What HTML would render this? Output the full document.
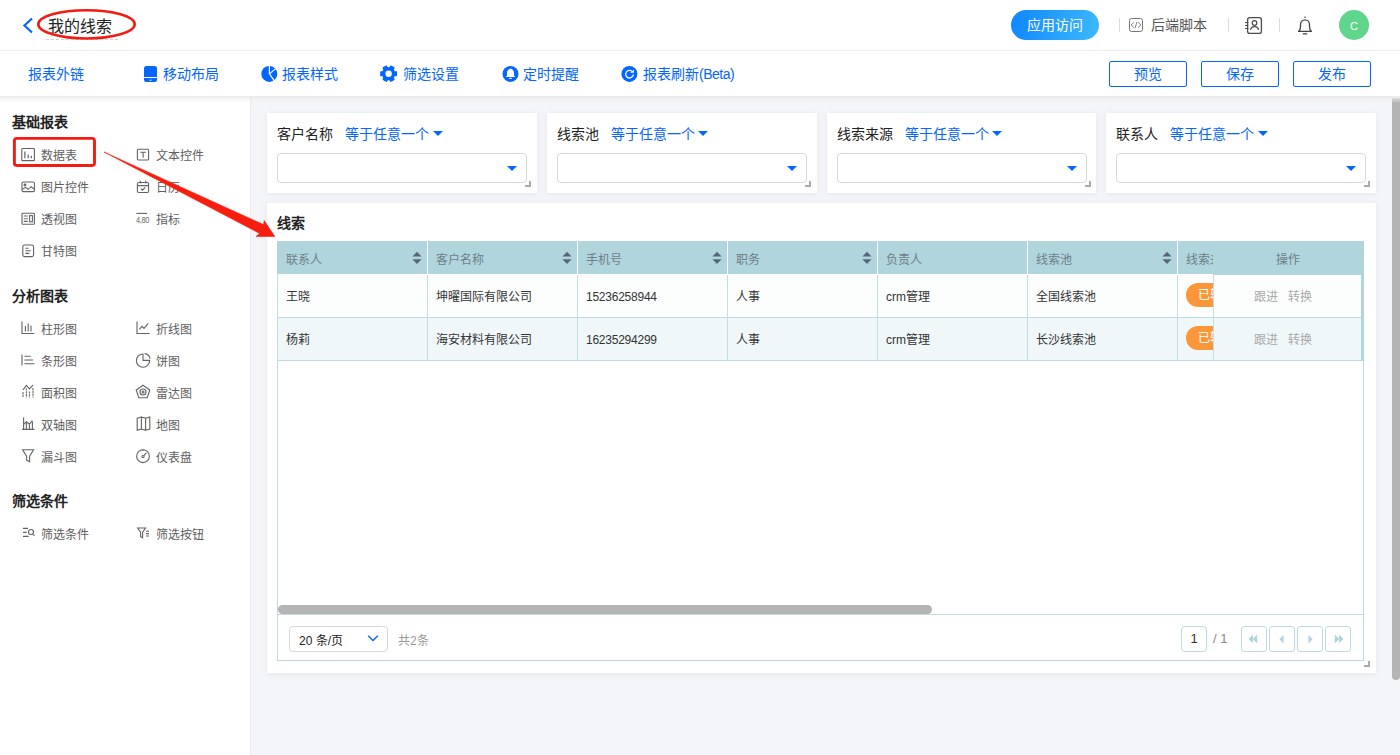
<!DOCTYPE html>
<html lang="zh-CN">
<head>
<meta charset="utf-8">
<title>我的线索</title>
<style>
*{box-sizing:border-box;margin:0;padding:0}
html,body{width:1400px;height:755px;overflow:hidden;background:#f4f5f9;font-family:"Liberation Sans",sans-serif;font-size:12px;color:#333}
.abs{position:absolute}
.t{position:absolute;white-space:nowrap;line-height:1}
#hdr{position:absolute;left:0;top:0;width:1400px;height:51px;background:#fff;border-bottom:1px solid #ececec}
#bar{position:absolute;left:0;top:51px;width:1400px;height:45px;background:#fff}
#side{position:absolute;left:0;top:96px;width:250px;height:659px;background:#fff}
.blue{color:#0465ff}
.tb{font-size:14px;color:#0465ff;top:67px}
.btn{position:absolute;top:61px;width:78px;height:26px;border:1px solid #0465ff;border-radius:2px;background:#fff;color:#0465ff;font-size:14px;text-align:center;line-height:24px}
.sec{font-size:14px;font-weight:bold;color:#222;left:12px}
.it{font-size:12px;color:#5e5e5e}
.card{position:absolute;background:#fff;box-shadow:0 1px 6px rgba(60,70,110,.08)}
.flab{font-size:14px;color:#222;top:14px;left:10px}
.fop{font-size:14px;color:#0465ff;top:14px}
.fsel{position:absolute;left:10px;top:40px;width:250px;height:30px;border:1px solid #d9d9d9;border-radius:4px;background:#fff}
.tri{position:absolute;width:0;height:0;border-left:5px solid transparent;border-right:5px solid transparent;border-top:5.5px solid #0465ff}
.rsz{position:absolute;width:6px;height:6px;border-right:2px solid #a9a9a9;border-bottom:2px solid #a9a9a9}

.th{position:absolute;top:241px;height:33px;background:#b0d5dd;border-left:1px solid #fff;font-size:12px;color:#6d7f88;line-height:38px;padding-left:8px;overflow:hidden;white-space:nowrap}
.td{position:absolute;height:43px;border-left:1px solid #c3dfe6;border-bottom:1px solid #bcdbe2;font-size:12px;color:#333;line-height:45px;padding-left:8px;overflow:hidden;white-space:nowrap}
.r1{top:275px;background:#fcfefe}
.r2{top:318px;background:#eff7f9}
.pill{position:absolute;left:8px;top:8px;height:24px;line-height:25px;border-radius:12px;background:#fb9739;color:#fff;padding:0 12px;font-size:12px}
.op{color:#a9a9a9}
.pg{position:absolute;top:626px;width:26px;height:26px;border:1px solid #bcdbe2;border-radius:3px;background:#fff}
</style>
</head>
<body>
<div id="hdr">
<div class="t" style="left:48px;top:18.5px;font-size:16px;color:#222">我的线索</div>
<div class="abs" style="left:46px;top:39px;width:72px;border-top:1px dashed #d0d0d0"></div>
<div class="abs" style="left:1011px;top:10px;width:88px;height:30px;border-radius:15px;background:linear-gradient(100deg,#0f86ff 0%,#3cbaff 100%);color:#fff;font-size:14px;text-align:center;line-height:30px">应用访问</div>
<div class="abs" style="left:1119px;top:18px;width:1px;height:14px;background:#dcdcdc"></div>
<div class="abs" style="left:1228px;top:18px;width:1px;height:14px;background:#dcdcdc"></div>
<div class="abs" style="left:1279px;top:18px;width:1px;height:14px;background:#dcdcdc"></div>
<div class="t" style="left:1151px;top:18px;font-size:14px;color:#555">后端脚本</div>
<div class="abs" style="left:1339px;top:10px;width:30px;height:30px;border-radius:15px;background:#5fd68c;color:#fff;font-size:11px;text-align:center;line-height:32px">C</div>
</div>
<div id="bar"></div>
<div class="t tb" style="left:28px">报表外链</div>
<div class="t tb" style="left:163px">移动布局</div>
<div class="t tb" style="left:282px">报表样式</div>
<div class="t tb" style="left:403px">筛选设置</div>
<div class="t tb" style="left:523px">定时提醒</div>
<div class="t tb" style="left:643px">报表刷新<span style="letter-spacing:-0.5px">(Beta)</span></div>
<div class="btn" style="left:1109px">预览</div>
<div class="btn" style="left:1201px">保存</div>
<div class="btn" style="left:1293px">发布</div>
<div id="side"></div>
<div class="t sec" style="top:115px">基础报表</div>
<div class="t it" style="left:41px;top:150px">数据表</div>
<div class="t it" style="left:156px;top:150px">文本控件</div>
<div class="t it" style="left:41px;top:182px">图片控件</div>
<div class="t it" style="left:156px;top:182px">日历</div>
<div class="t it" style="left:41px;top:214px">透视图</div>
<div class="t it" style="left:156px;top:214px">指标</div>
<div class="t it" style="left:41px;top:246px">甘特图</div>
<div class="t sec" style="top:288.5px">分析图表</div>
<div class="t it" style="left:41px;top:323.5px">柱形图</div>
<div class="t it" style="left:156px;top:323.5px">折线图</div>
<div class="t it" style="left:41px;top:355.5px">条形图</div>
<div class="t it" style="left:156px;top:355.5px">饼图</div>
<div class="t it" style="left:41px;top:387.5px">面积图</div>
<div class="t it" style="left:156px;top:387.5px">雷达图</div>
<div class="t it" style="left:41px;top:419.5px">双轴图</div>
<div class="t it" style="left:156px;top:419.5px">地图</div>
<div class="t it" style="left:41px;top:451.5px">漏斗图</div>
<div class="t it" style="left:156px;top:451.5px">仪表盘</div>
<div class="t sec" style="top:493.5px">筛选条件</div>
<div class="t it" style="left:41px;top:528.5px">筛选条件</div>
<div class="t it" style="left:156px;top:528.5px">筛选按钮</div>
<svg class="abs" style="left:0;top:0" width="1400" height="100" viewBox="0 0 1400 100" fill="none">
<polyline points="32,18.5 24.5,25.5 32,32.5" stroke="#0465ff" stroke-width="2.2" fill="none"/>
<ellipse cx="86.5" cy="24.350" rx="48.200" ry="14.150" stroke="#f21c12" stroke-width="2.600"/>
<!-- code icon -->
<rect x="1129.5" y="18.5" width="13" height="13" rx="2" stroke="#777" stroke-width="1"/>
<path d="M1133.8 22.2l-2.6 2.8 2.6 2.8M1138.2 22.2l2.6 2.8-2.6 2.8M1137 21.8l-2 6.4" stroke="#777" stroke-width="0.9"/>
<!-- contact icon -->
<rect x="1247.6" y="17.6" width="13.8" height="15.8" rx="2.2" stroke="#4c4c4c" stroke-width="1.3"/>
<circle cx="1254.5" cy="23" r="2.3" stroke="#4c4c4c" stroke-width="1.2"/>
<path d="M1250.5 30c.4-4.6 7.6-4.6 8 0" stroke="#4c4c4c" stroke-width="1.2"/>
<path d="M1245 22.5h3.4M1245 25.5h3.4M1245 28.5h3.4" stroke="#4c4c4c" stroke-width="1.1"/>
<!-- bell -->
<path d="M1298.6 31.4c1.5-1 1.9-2.4 1.9-4.6v-2.4a4.5 4.5 0 0 1 9 0v2.4c0 2.2.4 3.600 1.900 4.600z" stroke="#444" stroke-width="1.3" stroke-linejoin="round"/>
<circle cx="1305" cy="17.3" r="0.8" fill="#444"/>
<path d="M1303.300 33.900h3.400" stroke="#444" stroke-width="1.300" stroke-linecap="round"/>
<!-- mobile -->
<rect x="144" y="66" width="13" height="16" rx="2.5" fill="#0465ff"/>
<rect x="144" y="77" width="13" height="1" fill="#fff"/>
<rect x="149.5" y="79.7" width="2" height="1" fill="#fff"/>
<!-- pie -->
<circle cx="269.3" cy="73.9" r="8" fill="#0465ff"/>
<path d="M269.4 65.6V73.8L274.4 80.8M269.8 73.600L275.600 68.600" stroke="#fff" stroke-width="1.200" fill="none"/>
<!-- gear -->
<g transform="translate(388.6,73.7)"><path d="M7.79,-1.80L7.79,1.80L5.60,2.15L4.66,3.78L5.46,5.85L2.34,7.65L0.94,5.93L-0.94,5.93L-2.34,7.65L-5.46,5.85L-4.66,3.78L-5.60,2.15L-7.79,1.80L-7.79,-1.80L-5.60,-2.15L-4.66,-3.78L-5.46,-5.85L-2.34,-7.65L-0.94,-5.93L0.94,-5.93L2.34,-7.65L5.46,-5.85L4.66,-3.78L5.60,-2.15z" fill="#0465ff" stroke="#0465ff" stroke-width="1.2" stroke-linejoin="round"/><circle r="3.2" fill="#fff"/></g>
<!-- bell circle -->
<circle cx="510.5" cy="73.9" r="8" fill="#0465ff"/>
<path d="M510.5 68.500C508.200 69.400 507 71 507 73V75.400L505.800 76.900H515.200L514 75.400V73C514 71 512.800 69.400 510.500 68.500z" fill="#fff"/>
<rect x="509.200" y="77.800" width="2.600" height="1.100" rx=".4" fill="#fff"/>
<!-- refresh circle -->
<circle cx="629.4" cy="73.9" r="8" fill="#0465ff"/>
<path d="M632.100 71.400A3.800 3.800 0 1 0 633.300 74.500" stroke="#fff" stroke-width="1.250" fill="none"/>
<path d="M630.100 72.800L633.900 69.800V72.800z" fill="#fff"/>
</svg>
<div class="card" style="left:267.0px;top:113px;width:269.75px;height:80px"><div class="t flab">客户名称</div><div class="t fop" style="left:78px">等于任意一个</div><div class="tri" style="left:165.5px;top:18px"></div><div class="fsel"></div><div class="tri" style="left:240px;top:52.5px"></div><div class="rsz" style="left:258px;top:68px"></div></div>
<div class="card" style="left:546.75px;top:113px;width:269.75px;height:80px"><div class="t flab">线索池</div><div class="t fop" style="left:64px">等于任意一个</div><div class="tri" style="left:151.5px;top:18px"></div><div class="fsel"></div><div class="tri" style="left:240px;top:52.5px"></div><div class="rsz" style="left:258px;top:68px"></div></div>
<div class="card" style="left:826.5px;top:113px;width:269.75px;height:80px"><div class="t flab">线索来源</div><div class="t fop" style="left:78px">等于任意一个</div><div class="tri" style="left:165.5px;top:18px"></div><div class="fsel"></div><div class="tri" style="left:240px;top:52.5px"></div><div class="rsz" style="left:258px;top:68px"></div></div>
<div class="card" style="left:1106.25px;top:113px;width:269.75px;height:80px"><div class="t flab">联系人</div><div class="t fop" style="left:64px">等于任意一个</div><div class="tri" style="left:151.5px;top:18px"></div><div class="fsel"></div><div class="tri" style="left:240px;top:52.5px"></div><div class="rsz" style="left:258px;top:68px"></div></div>
<div class="card" style="left:267px;top:203px;width:1109px;height:470px"></div>
<div class="t" style="left:277px;top:216px;font-size:14px;font-weight:bold;color:#222">线索</div>
<div class="abs" style="left:277px;top:241px;width:1087px;height:420px;border:1px solid #bcdbe2;border-top:none;background:#fff"></div>
<div class="th" style="left:277px;width:150px;border-left-color:#b0d5dd;">联系人</div>
<svg class="abs" style="left:412px;top:251px" width="10" height="14" viewBox="0 0 10 14"><path d="M0.4 5.6L5 0.8l4.6 4.8zM0.4 8.2L5 13l4.6-4.8z" fill="#56667a"/></svg>
<div class="td r1" style="left:277px;width:150px">王晓</div>
<div class="td r2" style="left:277px;width:150px">杨莉</div>
<div class="th" style="left:427px;width:150px;">客户名称</div>
<svg class="abs" style="left:562px;top:251px" width="10" height="14" viewBox="0 0 10 14"><path d="M0.4 5.6L5 0.8l4.6 4.8zM0.4 8.2L5 13l4.6-4.8z" fill="#56667a"/></svg>
<div class="td r1" style="left:427px;width:150px">坤曜国际有限公司</div>
<div class="td r2" style="left:427px;width:150px">海安材料有限公司</div>
<div class="th" style="left:577px;width:150px;">手机号</div>
<svg class="abs" style="left:712px;top:251px" width="10" height="14" viewBox="0 0 10 14"><path d="M0.4 5.6L5 0.8l4.6 4.8zM0.4 8.2L5 13l4.6-4.8z" fill="#56667a"/></svg>
<div class="td r1" style="left:577px;width:150px" ><span style="letter-spacing:-0.24px">15236258944</span></div>
<div class="td r2" style="left:577px;width:150px" ><span style="letter-spacing:-0.24px">16235294299</span></div>
<div class="th" style="left:727px;width:150px;">职务</div>
<svg class="abs" style="left:862px;top:251px" width="10" height="14" viewBox="0 0 10 14"><path d="M0.4 5.6L5 0.8l4.6 4.8zM0.4 8.2L5 13l4.6-4.8z" fill="#56667a"/></svg>
<div class="td r1" style="left:727px;width:150px">人事</div>
<div class="td r2" style="left:727px;width:150px">人事</div>
<div class="th" style="left:877px;width:150px;">负责人</div>
<div class="td r1" style="left:877px;width:150px">crm管理</div>
<div class="td r2" style="left:877px;width:150px">crm管理</div>
<div class="th" style="left:1027px;width:150px;">线索池</div>
<svg class="abs" style="left:1162px;top:251px" width="10" height="14" viewBox="0 0 10 14"><path d="M0.4 5.6L5 0.8l4.6 4.8zM0.4 8.2L5 13l4.6-4.8z" fill="#56667a"/></svg>
<div class="td r1" style="left:1027px;width:150px">全国线索池</div>
<div class="td r2" style="left:1027px;width:150px">长沙线索池</div>
<div class="th" style="left:1177px;width:36px;">线索来源</div>
<div class="td r1" style="left:1177px;width:36px"><span class="pill">已转换</span></div>
<div class="td r2" style="left:1177px;width:36px"><span class="pill">已转换</span></div>
<div class="th" style="left:1213px;width:151px;height:34px;border-left:none;padding:0 1px 0 0;text-align:center;border-top-right-radius:2px">操作</div>
<div class="td r1 op" style="left:1213px;width:151px;padding:0;border-right:3px solid #b0d5dd"><span style="position:absolute;left:39.5px">跟进</span><span style="position:absolute;left:74px">转换</span></div>
<div class="td r2 op" style="left:1213px;width:151px;padding:0;border-right:3px solid #b0d5dd"><span style="position:absolute;left:39.5px">跟进</span><span style="position:absolute;left:74px">转换</span></div>
<div class="abs" style="left:278px;top:605px;width:654px;height:9px;border-radius:4.5px;background:#b4b4b4"></div>
<div class="abs" style="left:278px;top:614px;width:1085px;height:1px;background:#bcdbe2"></div>
<div class="abs" style="left:289px;top:626px;width:99px;height:26px;border:1px solid #d9d9d9;border-radius:4px;background:#fff"></div>
<div class="t" style="left:299px;top:634.5px;font-size:12px;color:#222">20 条/页</div>
<svg class="abs" style="left:367px;top:634px" width="12" height="9" viewBox="0 0 12 9"><path d="M1.2 1.8L6 6.6l4.8-4.8" fill="none" stroke="#0465ff" stroke-width="1.4"/></svg>
<div class="t" style="left:398px;top:634.5px;font-size:12px;color:#999">共2条</div>
<div class="pg" style="left:1181px;border-radius:4px;text-align:center;line-height:24px;font-size:13px;color:#333">1</div>
<div class="t" style="left:1213px;top:632px;font-size:13px;color:#888">/ 1</div>
<div class="pg" style="left:1241px"><svg width="24" height="24" viewBox="1 0.6 24 24" fill="#b0d5dd"><path d="M12 8l-4.4 4.6 4.4 4.6zM16.2 8l-4.4 4.6 4.4 4.6z"/></svg></div>
<div class="pg" style="left:1269px"><svg width="24" height="24" viewBox="1 0.6 24 24" fill="#b0d5dd"><path d="M14.6 8.4l-4.2 4.4 4.2 4.4z"/></svg></div>
<div class="pg" style="left:1297px"><svg width="24" height="24" viewBox="1 0.6 24 24" fill="#b0d5dd"><path d="M11.4 8.4l4.2 4.4-4.2 4.4z"/></svg></div>
<div class="pg" style="left:1325px"><svg width="24" height="24" viewBox="1 0.6 24 24" fill="#b0d5dd"><path d="M9.8 8l4.4 4.6-4.4 4.6zM14 8l4.4 4.6-4.4 4.6z"/></svg></div>
<div class="rsz" style="left:1363.5px;top:660.5px"></div>
<div class="abs" style="left:1392px;top:98px;width:8px;height:582px;border-radius:0 0 4px 4px;background:#b4b4b4"></div>
<svg class="abs" style="left:0;top:100px" width="300" height="655" viewBox="0 100 300 655" fill="none" stroke="#636363" stroke-width="1.1">
<!-- row 155 : data table / text -->
<rect x="21.800" y="148.500" width="12.600" height="12.100" rx="0.700"/>
<path d="M24.900 151.400v6.800M28.200 154.400v3.800M31.300 155.800v2.400" stroke-width="1.200"/>
<rect x="137.4" y="149.2" width="11.2" height="10.8" rx="1"/>
<path d="M140.200 152.200h5.800M143.100 152.200v5.600"/>
<!-- row 187 : image / calendar -->
<rect x="22" y="182" width="12.4" height="9.6" rx="1.2"/>
<circle cx="25" cy="185" r="0.9"/>
<path d="M22.2 189.5l3.2-2.2 2.8 2 3-2.6 3 2.4"/>
<rect x="137.4" y="182.5" width="11.2" height="10" rx="1.2"/>
<path d="M137.4 185.6h11.2M140.3 180.8v2.6M145.7 180.8v2.6M140.8 188.6l1.6 1.6 2.8-2.8"/>
<!-- row 219 : pivot / indicator -->
<rect x="22" y="213.2" width="12.4" height="11" rx="0.8"/>
<path d="M23.8 216h4M23.8 218.7h4M23.8 221.4h4"/>
<rect x="29.6" y="215.6" width="2.8" height="6.2"/>
<path d="M136.4 213.4h10.6"/>
<!-- row 251 : gantt -->
<rect x="22.8" y="245" width="10.8" height="11.6" rx="1.8"/>
<path d="M25.4 248.3h3.2M25.4 250.8h5.4M25.4 253.4h4"/>
<!-- row 328.5 : bar / line -->
<path d="M22 321.5v12h12.4"/>
<path d="M25.4 326v5.4M28.2 323.4v8M31 325.4v6" stroke-width="1.1"/>
<path d="M137 321.5v12h12.6"/>
<path d="M139.4 329.4l2.6-3 2 2 4.2-5"/>
<!-- row 360.5 : hbar / pie -->
<path d="M22 354.4v11.2M24.4 356.2h6.200M24.400 360h8.800M24.400 363.800h10"/>
<path d="M143 354v6.4h6.6a6.6 6.6 0 1 1-6.6-6.4z" />
<path d="M144.6 353.6a6 6 0 0 1 5.4 5.2" />
<!-- row 392.5 : area / radar -->
<path d="M23 389.8l3.4-4.4 3 3.6 3.6-3.8"/>
<path d="M23 392v5.6M26.4 388.4v9.2M29.4 391.4v6.2M33 388v9.6" stroke-dasharray="2.2 0.6"/>
<path d="M143 385.2l6.8 4.8-2.6 7.8h-8.4l-2.6-7.8z"/>
<circle cx="143" cy="392" r="3"/><circle cx="143" cy="392" r="1"/>
<!-- row 424.5 : dual / map -->
<path d="M22 429.4h12.4M23.6 417.6v11.8M26.4 423v6M29.4 424.6v4.6M32.4 421.6v7.6"/>
<path d="M23.6 424.4l2.8-2.6 3 2.4 3-3.6"/>
<path d="M137.2 418.2l4.2-1.2v12l-4.2 1.2zM141.4 417l4.2 1.2v12l-4.2-1.2M145.6 418.2l4.2-1.2v12l-4.2 1.2"/>
<!-- row 456.5 : funnel / gauge -->
<path d="M22.6 449.8h11l-4 6.4v5.6l-3-1.6v-4z"/>
<circle cx="143" cy="456.2" r="6.4"/>
<circle cx="143" cy="456.6" r="1.1"/>
<path d="M143.8 455.6l2.6-2.8M143 449.8v1.2"/>
<!-- row 533.5 : filter cond / filter btn -->
<path d="M23 528.4h5M23 532.4h3.6M23 536.4h5.6"/>
<circle cx="31" cy="532" r="2.5"/>
<path d="M32.8 534l1.6 1.8"/>
<path d="M137.6 528h8l-3 4.2v5.6l-2-1.2v-4.4z"/>
<path d="M146 531.2h3M146 533.6h3M146 536h3" stroke-width="1.1"/>
<!-- red annotation -->
<rect x="14.400" y="138.400" width="80.100" height="27.100" rx="2.400" stroke="#f21c12" stroke-width="2.900"/>
<path d="M104 152 L263.5 224.6 L264.2 220.6 L274.8 236.4 L256 236.6 L259.6 233.4 Z" fill="#f71e10" stroke="#f71e10" stroke-width="0.6" stroke-linejoin="round"/>
</svg>
<div class="t" style="left:136px;top:215px;font-size:9.5px;letter-spacing:-0.5px;color:#666;transform:scaleX(.78);transform-origin:left top">4,80</div>
<div class="abs" style="left:0;top:96px;width:1400px;height:7px;background:linear-gradient(to bottom,rgba(234,234,234,.96),rgba(238,238,239,.55) 45%,rgba(242,242,244,0))"></div>
<div class="abs" style="left:250px;top:96px;width:1px;height:659px;background:rgba(0,0,0,.035)"></div>
</body>
</html>
